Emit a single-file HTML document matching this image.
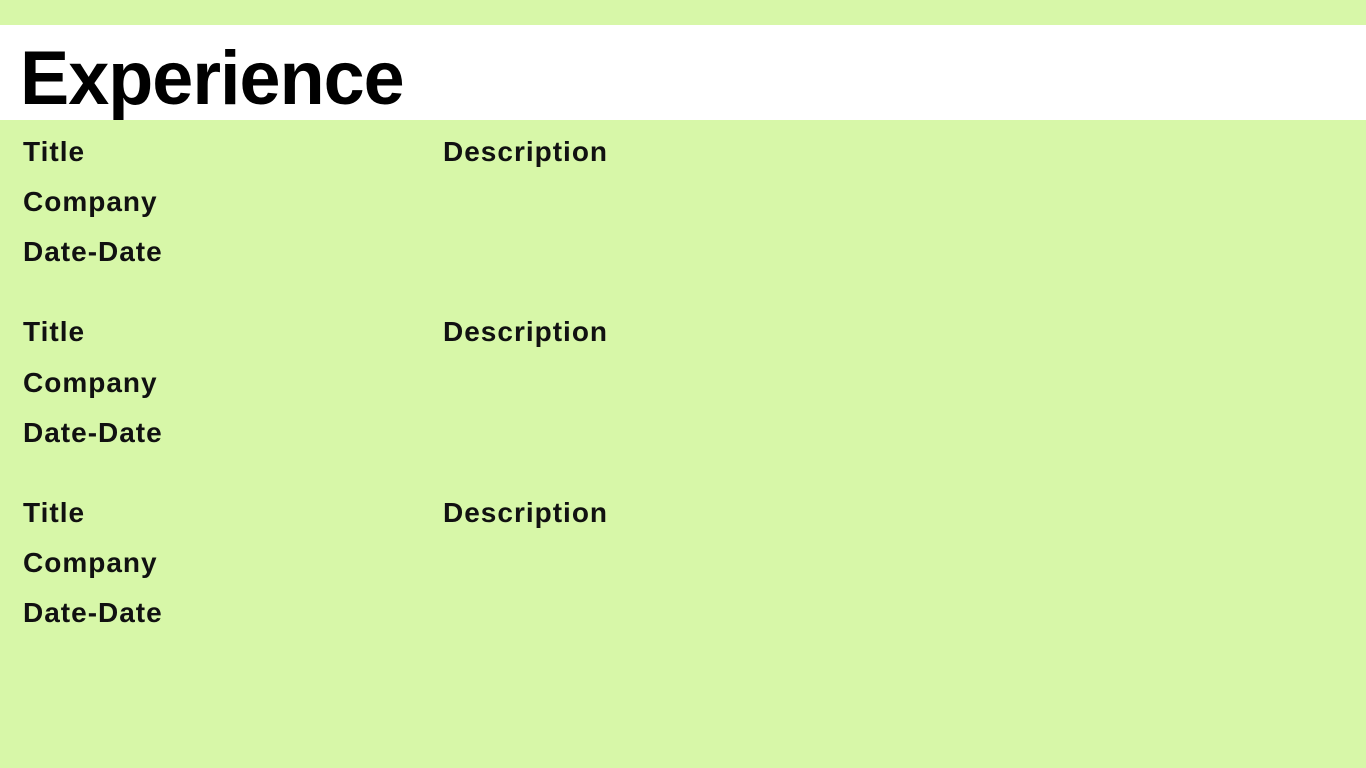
<!DOCTYPE html>
<html><head><meta charset="utf-8"><style>
html,body{margin:0;padding:0;width:1366px;height:768px;overflow:hidden;background:#d7f7a8;font-family:"Liberation Sans",sans-serif;}
.band{position:absolute;left:0;top:25px;width:1366px;height:95px;background:#fff;}
h1{position:absolute;left:20px;top:41px;margin:0;font-size:76px;line-height:76px;font-weight:bold;transform:scaleX(0.97);transform-origin:left top;letter-spacing:-1px;color:#000;}
.t{position:absolute;font-size:28px;line-height:28px;font-weight:bold;letter-spacing:1px;color:#111;}
</style></head><body>
<div class="band"></div>
<h1>Experience</h1>
<div class="t" style="left:23px;top:138px">Title</div>
<div class="t" style="left:23px;top:188px">Company</div>
<div class="t" style="left:23px;top:238px">Date-Date</div>
<div class="t" style="left:443px;top:138px">Description</div>
<div class="t" style="left:23px;top:318px">Title</div>
<div class="t" style="left:23px;top:369px">Company</div>
<div class="t" style="left:23px;top:419px">Date-Date</div>
<div class="t" style="left:443px;top:318px">Description</div>
<div class="t" style="left:23px;top:499px">Title</div>
<div class="t" style="left:23px;top:549px">Company</div>
<div class="t" style="left:23px;top:599px">Date-Date</div>
<div class="t" style="left:443px;top:499px">Description</div>
</body></html>
